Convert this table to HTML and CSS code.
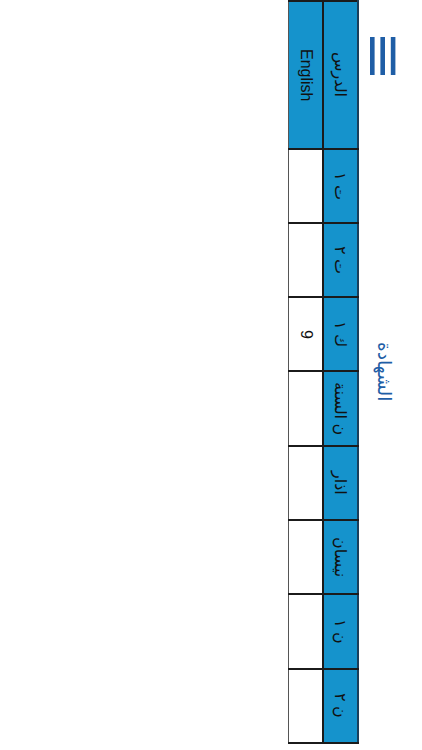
FILE: index.html
```html
<!DOCTYPE html>
<html lang="ar">
<head>
<meta charset="utf-8">
<link rel="stylesheet" href="styles.css">
</head>
<body>
<div class="page">
  <header class="topbar">
    <button class="menu" aria-label="menu">
      <svg width="26" height="38" viewBox="0 0 26 38">
        <rect x="0" y="0" width="4.6" height="38" fill="#1f5ea6"/>
        <rect x="10.4" y="0" width="4.6" height="38" fill="#1f5ea6"/>
        <rect x="20.8" y="0" width="4.6" height="38" fill="#1f5ea6"/>
      </svg>
    </button>
    <h1 class="title">الشهادة</h1>
  </header>
  <table class="grades">
    <tr class="head">
      <th class="subject">الدرس</th>
      <th>ت ١</th>
      <th>ت ٢</th>
      <th>ك ١</th>
      <th>ن السنة</th>
      <th>اذار</th>
      <th>نيسان</th>
      <th>ن ١</th>
      <th>ن ٢</th>
    </tr>
    <tr class="row">
      <th class="subject">English</th>
      <td></td>
      <td></td>
      <td>9</td>
      <td></td>
      <td></td>
      <td></td>
      <td></td>
      <td></td>
    </tr>
  </table>
</div>
</body>
</html>
```
FILE: styles.css
```css
html, body {
  margin: 0;
  padding: 0;
  background: #ffffff;
}

body {
  font-family: "Liberation Sans", "DejaVu Sans", Arial, sans-serif;
}

.page {
  writing-mode: vertical-rl;
  width: 422px;
  height: 750px;
  overflow: hidden;
}

.topbar {
  block-size: 63px;
  inline-size: 750px;
  display: flex;
  align-items: flex-start;
}

.menu {
  margin: 0;
  margin-inline-start: 37px;
  margin-block-start: 25.6px;
  padding: 0;
  border: 0;
  background: none;
  display: flex;
  line-height: 0;
}

.title {
  flex: 1;
  margin: 0;
  margin-inline-end: 81px;
  margin-block-start: 28px;
  text-align: center;
  font-family: "DejaVu Sans", sans-serif;
  font-weight: normal;
  font-size: 18.5px;
  line-height: 20px;
  color: #1f5ea6;
}

.grades {
  border-collapse: collapse;
  inline-size: 744px;
}

.grades th,
.grades td {
  block-size: 33px;
  inline-size: 72.5px;
  padding: 0;
  border: 2px solid #1b1b1b;
  text-align: center;
  vertical-align: middle;
  font-size: 16px;
  font-weight: normal;
  color: #111111;
}

.grades .subject {
  inline-size: 146px;
}

.grades .head th {
  background: #1593cc;
  border-block-start-color: #1b3f5a;
}

.grades .row th {
  background: #1593cc;
}

.grades .row td {
  background: #ffffff;
}

.grades .row th,
.grades .row td {
  border-block-end: 1px solid #555555;
}
```
